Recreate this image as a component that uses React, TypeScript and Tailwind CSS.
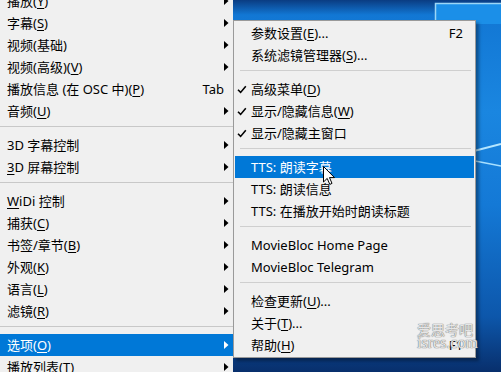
import React from 'react';

type Entry =
  | { label: string; sub?: boolean; hot?: boolean; shortcut?: string; check?: boolean }
  | 'sep';

const mainItems: Entry[] = [
  { label: '播放(&Y)', sub: true },
  { label: '字幕(&S)', sub: true },
  { label: '视频(基础)', sub: true },
  { label: '视频(高级)(&V)', sub: true },
  { label: '播放信息 (在 OSC 中)(&P)', shortcut: 'Tab' },
  { label: '音频(&U)', sub: true },
  'sep',
  { label: '3D 字幕控制', sub: true },
  { label: '&3D 屏幕控制', sub: true },
  'sep',
  { label: '&WiDi 控制', sub: true },
  { label: '捕获(&C)', sub: true },
  { label: '书签/章节(&B)', sub: true },
  { label: '外观(&K)', sub: true },
  { label: '语言(&L)', sub: true },
  { label: '滤镜(&R)', sub: true },
  'sep',
  { label: '选项(&O)', sub: true, hot: true },
  { label: '播放列表(&T)', sub: true },
];

const optionItems: Entry[] = [
  { label: '参数设置(&E)...', shortcut: 'F2' },
  { label: '系统滤镜管理器(&S)...' },
  'sep',
  { label: '高级菜单(&D)', check: true },
  { label: '显示/隐藏信息(&W)', check: true },
  { label: '显示/隐藏主窗口', check: true },
  'sep',
  { label: 'TTS: 朗读字幕', hot: true },
  { label: 'TTS: 朗读信息' },
  { label: 'TTS: 在播放开始时朗读标题' },
  'sep',
  { label: 'MovieBloc Home Page' },
  { label: 'MovieBloc Telegram' },
  'sep',
  { label: '检查更新(&U)...' },
  { label: '关于(&T)...' },
  { label: '帮助(&H)', shortcut: 'F1' },
];

// "&X" marks the mnemonic letter, like a Win32 menu string
const Label = ({ text }: { text: string }) => {
  const i = text.indexOf('&');
  if (i < 0) return <span className="whitespace-pre">{text}</span>;
  return (
    <span className="whitespace-pre">
      {text.slice(0, i)}
      <span className="underline underline-offset-[2px] decoration-1">{text[i + 1]}</span>
      {text.slice(i + 2)}
    </span>
  );
};

const Arrow = ({ white }: { white?: boolean }) => (
  <svg width="5" height="8" viewBox="0 0 5 8" className="shrink-0">
    <path d="M0 0 L4.5 4 L0 8 Z" fill={white ? '#ffffff' : '#000000'} />
  </svg>
);

const Check = () => (
  <svg width="10" height="9" viewBox="0 0 10 9">
    <path d="M1 4.8 L3.6 7.4 L8.8 1.2" fill="none" stroke="#000" strokeWidth="1.6" />
  </svg>
);

const MainMenu = () => (
  <div className="w-[233px] shrink-0 -mt-[10px] bg-[#f0f0f0] pb-4">
    {mainItems.map((it, idx) =>
      it === 'sep' ? (
        <div key={idx} className="h-[12px] pt-[4px]">
          <div className="h-px bg-[#c8c8c8]" />
        </div>
      ) : (
        <div
          key={idx}
          className={`flex items-center h-[22px] pl-[7px] pr-[4px] ${
            it.hot ? 'bg-[#0078d7] text-white' : 'text-black'
          }`}
        >
          <div className="flex-1 pt-px">
            <Label text={it.label} />
          </div>
          {it.shortcut && <span className="pr-[5px] pt-px">{it.shortcut}</span>}
          {it.sub && <Arrow white={it.hot} />}
        </div>
      )
    )}
  </div>
);

const OptionsMenu = () => (
  <div className="w-[243px] shrink-0 mt-[20px] border border-[#9a9a9a] bg-[#f0f0f0] p-px shadow-[3px_3px_3px_rgba(0,0,0,0.35)]">
    {optionItems.map((it, idx) =>
      it === 'sep' ? (
        <div key={idx} className="h-[12px] pt-[4px] pl-[5px] pr-[3px]">
          <div className="h-px bg-[#cfcfcf]" />
        </div>
      ) : (
        <div
          key={idx}
          className={`flex items-center h-[22px] ${
            it.hot ? 'bg-[#0078d7] text-white' : 'text-black'
          }`}
        >
          <div className="w-[16px] shrink-0 pl-[2px] flex items-center">{it.check && <Check />}</div>
          <div className="flex-1 pt-px">
            <Label text={it.label} />
          </div>
          {it.shortcut && <span className="pr-[11px] pt-px">{it.shortcut}</span>}
        </div>
      )
    )}
  </div>
);

const Wallpaper = () => (
  <svg className="absolute inset-0" width="501" height="372" viewBox="0 0 501 372">
    <defs>
      <linearGradient id="wp" x1="0" y1="0" x2="0" y2="1">
        <stop offset="0" stopColor="#0a3c82" />
        <stop offset="0.04" stopColor="#1277d4" />
        <stop offset="0.3" stopColor="#1a86e0" />
        <stop offset="0.55" stopColor="#1479d6" />
        <stop offset="0.85" stopColor="#0d57ab" />
        <stop offset="1" stopColor="#082f6c" />
      </linearGradient>
    </defs>
    <rect width="501" height="372" fill="url(#wp)" />
    <rect x="436" y="4" width="65" height="20" fill="#1b8fe8" />
    <path d="M435.5 24 L435.5 3.5 L501 3.5" fill="none" stroke="#9bd6f6" strokeWidth="1.5" />
    <path d="M470 152 L501 144" stroke="#b4e6ff" strokeWidth="2" />
    <path d="M470 160 L501 166" stroke="#a8e0ff" strokeWidth="1.5" />
  </svg>
);

const Cursor = () => (
  <svg
    className="absolute left-[323px] top-[166px]"
    width="13"
    height="20"
    viewBox="0 0 13 20"
  >
    <path
      d="M0.5 0.5 L0.5 16 L4.2 12.4 L6.8 18.4 L9 17.4 L6.5 11.6 L11.5 11.6 Z"
      fill="#ffffff"
      stroke="#000000"
      strokeWidth="1"
      strokeLinejoin="round"
    />
  </svg>
);

export default function App() {
  return (
    <div
      className="relative w-[501px] h-[372px] overflow-hidden text-[13px] leading-none"
      style={{ fontFamily: '"Noto Sans", "Noto Sans CJK SC", sans-serif' }}
    >
      <Wallpaper />
      <div className="relative flex items-start">
        <MainMenu />
        <OptionsMenu />
      </div>
      <Cursor />
      <div className="absolute left-[417px] top-[322px] text-[#e6e6e6] leading-none [text-shadow:0_0_1px_#6f6f6f,0_0_1px_#6f6f6f]">
        <div className="text-[14px]" style={{ fontFamily: '"Noto Sans CJK SC", serif' }}>
          爱思考吧
        </div>
        <div className="text-[16px] -mt-[1px]" style={{ fontFamily: '"Liberation Serif", serif' }}>
          isres.com
        </div>
      </div>
    </div>
  );
}
